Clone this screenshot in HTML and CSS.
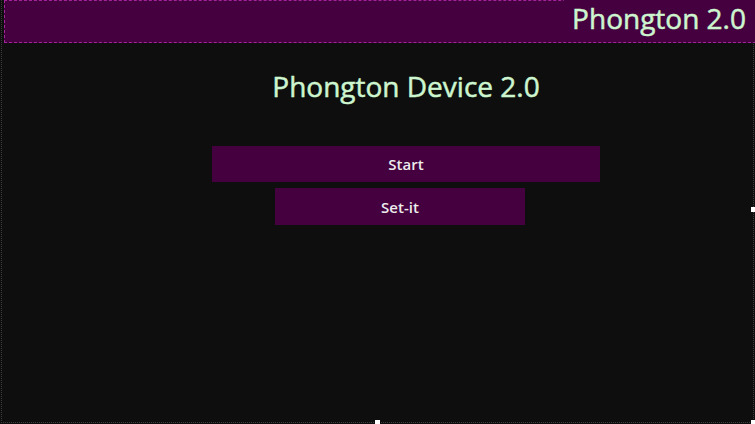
FILE: index.html
```html
<!DOCTYPE html>
<html lang="en">
<head>
  <meta charset="UTF-8">
  <meta name="viewport" content="width=device-width, initial-scale=1.0">
  <title>Phongton 2.0</title>
  <link rel="stylesheet" href="styles.css">
</head>
<body>
  <div class="window">
    <header class="title-bar">
      <span class="app-title">Phongton 2.0</span>
    </header>

    <main class="content">
      <h1>Phongton Device 2.0</h1>
      <button class="btn btn-start">Start</button>
      <button class="btn btn-set">Set-it</button>
    </main>

    <!-- designer resize handles -->
    <span class="handle handle-right"></span>
    <span class="handle handle-bottom"></span>
    <span class="handle handle-corner"></span>
  </div>
</body>
</html>
```

FILE: styles.css
```css
html, body {
  margin: 0;
  padding: 0;
  background-color: #0e0e0e;
}

body {
  font-family: "Open Sans", "Noto Sans", Arial, sans-serif;
  width: 755px;
  height: 424px;
  overflow: hidden;
}

.window {
  position: relative;
  box-sizing: border-box;
  width: 753px;
  height: 423px;
  margin-left: 1px;
  border: 1px dotted #3c3c3c;
  border-top: none;
  padding-left: 2px;
}

.title-bar {
  display: flex;
  justify-content: flex-end;
  align-items: flex-start;
  box-sizing: border-box;
  height: 43px;
  margin-right: -3px;
  background-color: #45003f;
  border: 1px dashed #a3239a;
  border-right: none;
}

.app-title {
  margin-top: -1px;
  padding: 1px 10px 0 8px;
  background-color: #45003f;
  color: #cdf5cf;
  font-size: 28px;
  line-height: 35px;
  -webkit-text-stroke: 0.5px #cdf5cf;
}

.content {
  display: flex;
  flex-direction: column;
  align-items: stretch;
  width: 388px;
  margin-left: 208px;
}

h1 {
  margin: 26px 0 0 0;
  text-align: center;
  font-size: 28px;
  font-weight: normal;
  line-height: 34px;
  color: #cdf5cf;
  -webkit-text-stroke: 0.5px #cdf5cf;
}

.btn {
  border: none;
  background-color: #45003f;
  color: #ececec;
  font-family: inherit;
  font-size: 15px;
  font-weight: 600;
  height: 36px;
  padding: 0;
}

.btn-start {
  margin-top: 43px;
}

.btn-set {
  align-self: flex-start;
  width: 250px;
  height: 37px;
  margin-top: 6px;
  margin-left: 63px;
}

.handle {
  position: absolute;
  width: 5px;
  height: 5px;
  background-color: #ffffff;
}

.handle-right {
  right: -3px;
  top: 207px;
}

.handle-bottom {
  left: 373px;
  bottom: -3px;
}

.handle-corner {
  right: -3px;
  bottom: -3px;
}
```
